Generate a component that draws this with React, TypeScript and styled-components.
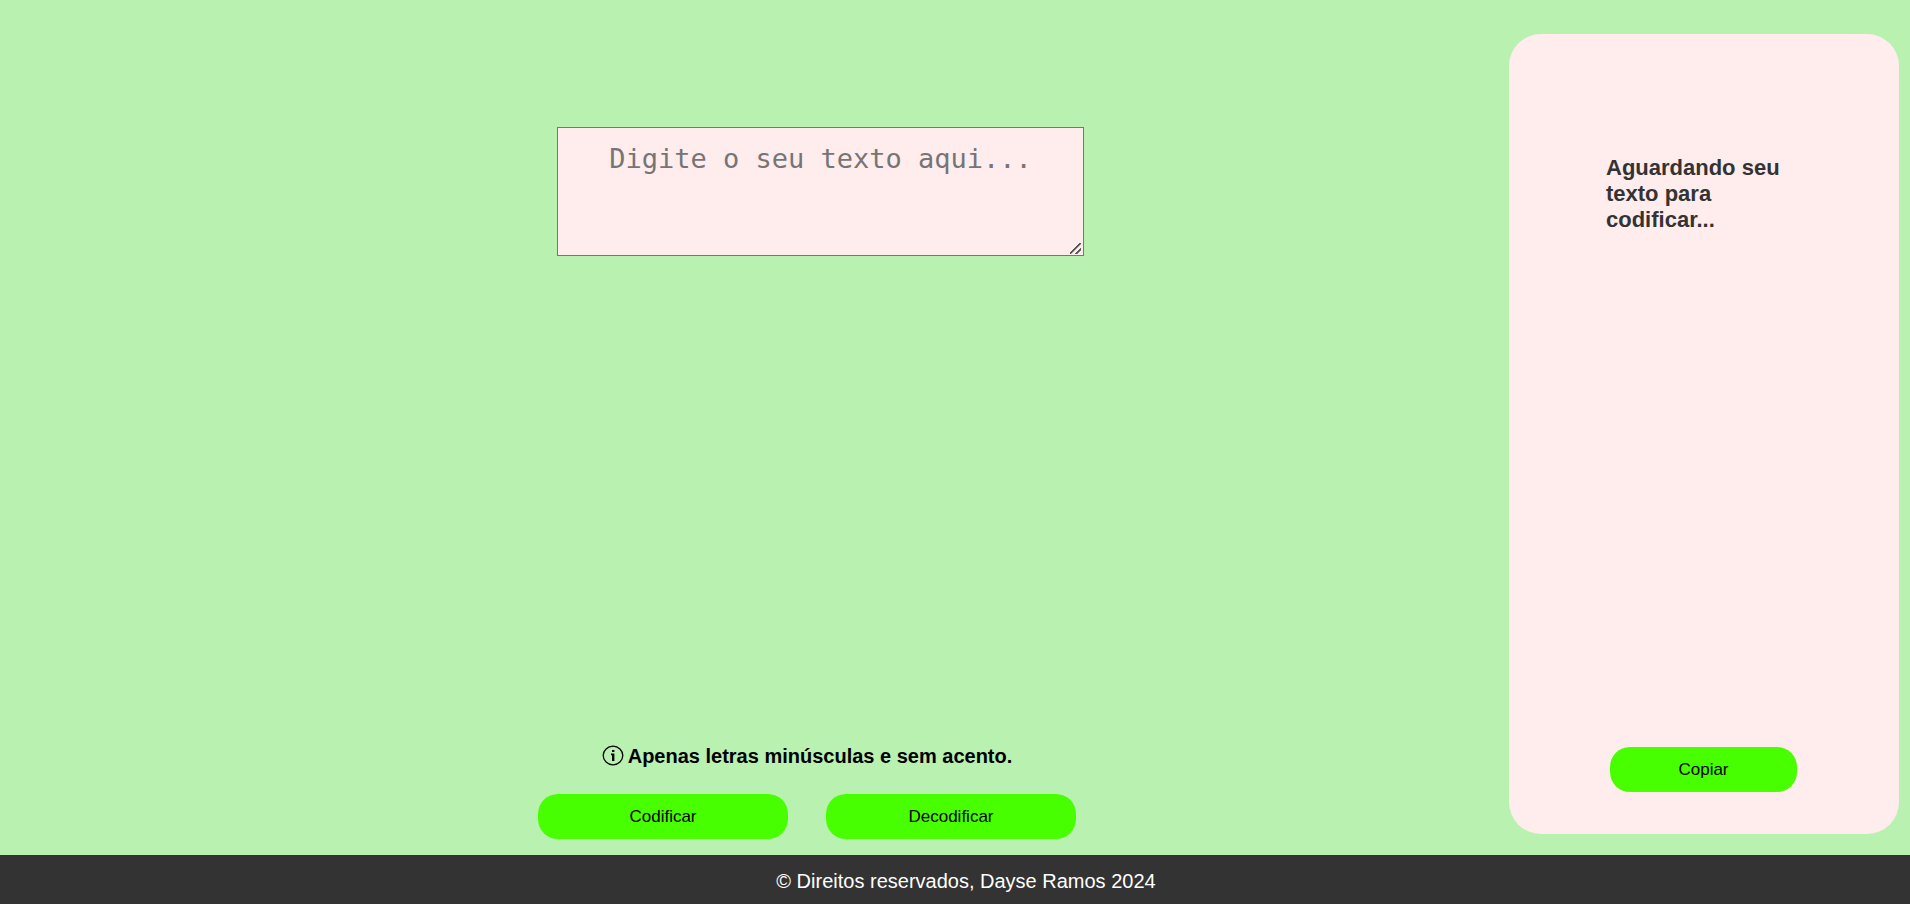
import React, { useState } from "react";
import styled, { createGlobalStyle } from "styled-components";

const GlobalStyle = createGlobalStyle`
  * { box-sizing: border-box; }
  body {
    margin: 0;
    background: #b9f1b1;
    font-family: "Liberation Sans", Arial, sans-serif;
  }
`;

const Page = styled.div`
  min-height: 100vh;
  display: flex;
  flex-direction: column;
`;

const Main = styled.main`
  flex: 1;
  display: flex;
`;

const Editor = styled.section`
  flex: 1;
  display: flex;
  justify-content: center;
  padding: 127px 0 16px 113px;
`;

const EditorColumn = styled.div`
  width: 546px;
  display: flex;
  flex-direction: column;
  justify-content: space-between;
`;

const TextInput = styled.textarea`
  align-self: flex-end;
  width: 527px;
  height: 129px;
  margin: 0;
  padding: 16px;
  border: 1px solid #767676;
  border-radius: 0;
  background: #ffecec;
  color: #000;
  font-family: "DejaVu Sans Mono", monospace;
  font-size: 27px;
  line-height: 30px;
  text-align: center;
  &::placeholder { color: #757575; }
  &::-webkit-resizer {
    background: linear-gradient(
      135deg,
      transparent 42%, #555 45%, #555 53%, transparent 56%,
      transparent 70%, #555 73%, #555 81%, transparent 84%
    ) 2px 3px / 11px 11px no-repeat;
  }
`;

const Actions = styled.div`
  width: 538px;
  display: flex;
  flex-direction: column;
  align-items: center;
  gap: 26px;
`;

const Hint = styled.p`
  margin: 0;
  display: flex;
  align-items: center;
  gap: 4px;
  font-size: 20px;
  line-height: 24px;
  font-weight: 700;
`;

const ButtonRow = styled.div`
  display: flex;
  gap: 38px;
`;

const Button = styled.button<{ $width: number }>`
  width: ${(p) => p.$width}px;
  height: 45px;
  padding: 0;
  border: 0;
  border-radius: 20px;
  background: #48ff00;
  color: #000;
  font-family: inherit;
  font-size: 17px;
  cursor: pointer;
`;

const Result = styled.aside`
  width: 390px;
  margin: 34px 11px 21px 0;
  padding: 121px 98px 42px 97px;
  border-radius: 32px;
  background: #ffecec;
  display: flex;
  flex-direction: column;
  align-items: center;
  justify-content: space-between;
`;

const ResultText = styled.p`
  margin: 0;
  width: 100%;
  color: #333;
  font-size: 22px;
  line-height: 26px;
  font-weight: 700;
`;

const Footer = styled.footer`
  padding: 14px 0 11px 22px;
  background: #333;
  color: #fff;
  font-size: 20px;
  line-height: 24px;
  text-align: center;
`;

const InfoIcon = () => (
  <svg width="22" height="22" viewBox="0 0 22 22" aria-hidden="true">
    <ellipse cx="11" cy="10.5" rx="9.8" ry="9.3" fill="none" stroke="#000" strokeWidth="1.3" />
    <path d="M10 5h2.4v2H10zM9 8.5h3.4V16H10v-5.8H9z" fill="#000" />
  </svg>
);

export default function App() {
  const [text, setText] = useState("");
  return (
    <Page>
      <GlobalStyle />
      <Main>
        <Editor>
          <EditorColumn>
            <TextInput
              aria-label="Texto"
              placeholder="Digite o seu texto aqui..."
              value={text}
              onChange={(e) => setText(e.target.value)}
            />
            <Actions>
              <Hint>
                <InfoIcon />
                Apenas letras minúsculas e sem acento.
              </Hint>
              <ButtonRow>
                <Button type="button" $width={250}>Codificar</Button>
                <Button type="button" $width={250}>Decodificar</Button>
              </ButtonRow>
            </Actions>
          </EditorColumn>
        </Editor>
        <Result>
          <ResultText>Aguardando seu texto para codificar...</ResultText>
          <Button type="button" $width={187}>Copiar</Button>
        </Result>
      </Main>
      <Footer>© Direitos reservados, Dayse Ramos 2024</Footer>
    </Page>
  );
}
